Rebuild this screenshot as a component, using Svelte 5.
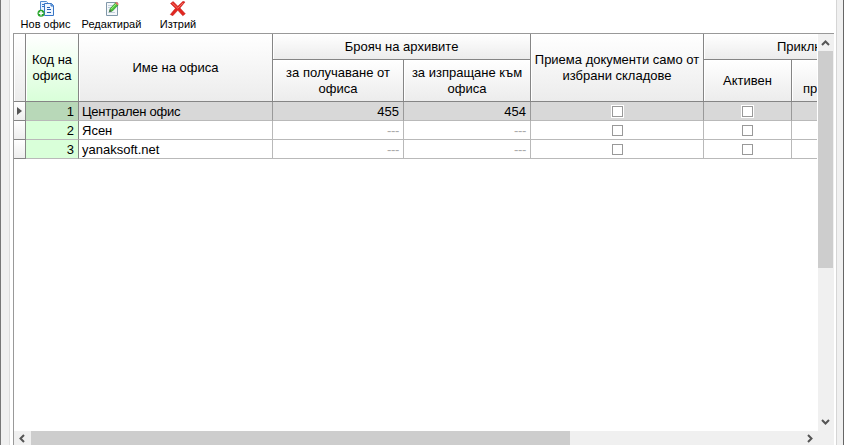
<script>
  const offices = [
    { id: 1, name: 'Централен офис', received: '455', sent: '454' },
    { id: 2, name: 'Ясен', received: '---', sent: '---' },
    { id: 3, name: 'yanaksoft.net', received: '---', sent: '---' }
  ];
  let selected = $state(1);
</script>

<div class="window">
  <div class="edge left"></div>
  <main>
    <div class="toolbar">
      <button class="new">
        <svg width="18" height="17" viewBox="0 0 18 17">
          <path d="M3.5 1.5h6l1 1v9h-7z" fill="#e8f2ff" stroke="#508bd2" />
          <path d="M5 4.5h4M5 6.5h3" stroke="#3576c5" />
          <path d="M7.5 3.5h7l2 2v10h-9z" fill="#eff6ff" stroke="#3876c5" />
          <path d="M14 3.5v2.5h2.5" fill="#8bb8ed" stroke="#3876c5" />
          <path d="M10 7.5h3M10 9.5h4M10 12.5h4" stroke="#245fb3" />
          <circle cx="4" cy="13.2" r="3.5" fill="#27a52b" />
          <path d="M4 11v4.5M1.8 13.2h4.5" stroke="#fff" stroke-width="1.4" />
        </svg>
        <span>Нов офис</span>
      </button>
      <button class="edit">
        <svg width="18" height="17" viewBox="0 0 18 17">
          <path d="M3.5 2.5h11v13h-11z" fill="#f4f7fa" stroke="#8198aa" />
          <path d="M5 5.5h5M5 7.5h4M5 12.5h7" stroke="#c3d0dc" />
          <path d="M6.3 11.9l.8-3.1 5.6-6 2.4 2.2-5.7 6z" fill="#4fc53c" stroke="#258b2b" stroke-width=".7" />
          <path d="M12.2 3.1l1.3-1.3 2.3 2.1-1.2 1.4z" fill="#e9746a" />
          <path d="M8 9.2l4.9-5.1" stroke="#a6ed80" />
          <path d="M6.2 12l.7-2.4 1.7 1.7z" fill="#555" />
        </svg>
        <span>Редактирай</span>
      </button>
      <button class="delete">
        <svg width="18" height="17" viewBox="0 0 18 17">
          <path d="M1.5 3.5l2.7-2 4.6 4.7 5.2-4.9 2 .7-5 6 5.3 5.8-2.5 2-5-5.5-5 5.4-2.5-1.2 5.1-6.2z" fill="#e22720" stroke="#bd1b19" stroke-width=".5" />
          <path d="M3.2 3.1l5.6 5.2 5.1-5.3" fill="none" stroke="#f47268" />
        </svg>
        <span>Изтрий</span>
      </button>
    </div>

    <section class="data">
      <div class="upper">
        <div class="table">
          <div class="head">
            <div class="tall"></div>
            <div class="tall code"><span>Код на<br />офиса</span></div>
            <div class="tall"><span>Име на офиса</span></div>
            <div class="counter"><span>Брояч на архивите</span></div>
            <div class="sub"><span>за получаване от<br />офиса</span></div>
            <div class="sub"><span>за изпращане към<br />офиса</span></div>
            <div class="tall stores"><span>Приема документи само от<br />избрани складове</span></div>
            <div class="apps"><span>Приклю</span></div>
            <div class="sub active"><span>Активен</span></div>
            <div class="sub last"><span>пр</span></div>
          </div>
          {#each offices as office}
            <div class="row" class:selected={selected === office.id}>
              <div class="marker">
                {#if selected === office.id}<svg width="5" height="8"><path d="M0 0l5 4-5 4z" fill="#555" /></svg>{/if}
              </div>
              <div class="id number">{office.id}</div>
              <div class="name" class:tight={office.id === 1}>{office.name}</div>
              <div class="number" class:empty={office.id !== 1}>{office.received}</div>
              <div class="number" class:empty={office.id !== 1}>{office.sent}</div>
              <div class="check"><i></i></div>
              <div class="check"><i></i></div>
              <div></div>
            </div>
          {/each}
        </div>
        <div class="vertical">
          <svg width="15" height="17"><path d="M4 11l3.5-3.5L11 11" /></svg>
          <div class="thumb"></div>
          <svg class="down" width="15" height="17"><path d="M4 6l3.5 3.5L11 6" /></svg>
        </div>
      </div>
      <div class="horizontal">
        <svg width="17" height="14"><path d="M10 4L6.5 7.5 10 11" /></svg>
        <div class="thumb"></div>
        <svg class="right" width="17" height="14"><path d="M7 4l3.5 3.5L7 11" /></svg>
      </div>
    </section>
  </main>
  <div class="edge end"></div>
</div>

<style>
  :global(body) { overflow: hidden; background: #fff; }
  * { box-sizing: border-box; }
  .window { display: flex; width: 844px; height: 445px; overflow: hidden; font: 13px/16px "Liberation Sans", Arial, sans-serif; color: #000; }
  .edge { background: #f0f0f0; flex: none; }
  .left { width: 10px; border-left: 1px solid #777; border-right: 1px solid #dcdcdc; }
  .end { width: 8px; border-left: 1px solid #d5d5d5; border-right: 1px solid #666; }
  main { width: 826px; padding: 0 2px 0 3px; }
  .toolbar { height: 33px; display: flex; padding-left: 5px; }
  button { border: 0; background: transparent; padding: 0; display: flex; flex-direction: column; align-items: center; color: #000; font: 11px/13px "Liberation Sans", Arial, sans-serif; }
  button svg { display: block; flex: none; }
  button span { white-space: nowrap; padding-top: 1px; }
  .new { width: 55px; }
  .edit { width: 77px; }
  .delete { width: 56px; }
  .data { width: 821px; height: 412px; border-top: 1px solid #999; border-left: 1px solid #999; }
  .upper { display: flex; height: 397px; }
  .table { width: 804px; overflow: hidden; background: #fff; }
  .head, .row { display: grid; width: 803px; grid-template-columns: 12px 53px 194px 131px 127px 173px 88px 25px; }
  .head { grid-template-rows: 26px 42px; }
  .head > div { display: flex; align-items: center; justify-content: center; text-align: center; border-right: 1px solid #858585; border-bottom: 1px solid #858585; background: linear-gradient(#fff, #ececec); box-shadow: inset 1px 1px #fff; white-space: nowrap; overflow: hidden; }
  .head .tall { grid-row: 1 / 3; }
  .head .code { background: linear-gradient(#fff, #d9ffd9); }
  .head .counter { grid-column: 4 / 6; grid-row: 1; }
  .sub { grid-row: 2; }
  .stores { grid-column: 6; }
  .head .apps { grid-column: 7 / 9; grid-row: 1; justify-content: flex-start; padding-left: 73px; border-right: 0; }
  .active { grid-column: 7; }
  .head .last { justify-content: flex-start; align-items: flex-end; padding: 0 0 4px 11px; border-right: 0; }
  .row { height: 19px; line-height: 20px; }
  .row > div { border-right: 1px solid #b9b9b9; border-bottom: 1px solid #b9b9b9; white-space: nowrap; overflow: hidden; }
  .row > div:last-child { border-right: 0; }
  .row .marker { display: flex; align-items: center; padding-left: 3px; border-right-color: #858585; border-bottom-color: #858585; background: linear-gradient(#fff, #eee); }
  .selected > div { background: #d8d8d8; border-right-color: #999; }
  .number { text-align: right; padding-right: 4px; }
  .row .id { background: #d9ffd9; border-right-color: #858585; }
  .selected .id { background: #b8d8b8; }
  .name { padding-left: 3px; }
  .tight { letter-spacing: -.25px; }
  .empty { color: #aaa; letter-spacing: -.3px; }
  .check { display: flex; align-items: center; justify-content: center; }
  .check i { width: 11px; height: 11px; border: 1px solid #999; background: #fff; }
  .selected .check i { outline: 1px solid #fff; }
  .vertical { width: 16px; background: #f0f0f0; display: flex; flex-direction: column; }
  .vertical .thumb { width: 15px; height: 217px; background: #cdcdcd; }
  .vertical .down { margin-top: auto; }
  .horizontal { display: flex; height: 14px; background: #f0f0f0; }
  .horizontal .thumb { width: 539px; background: #cdcdcd; }
  .horizontal .right { margin-left: auto; margin-right: 16px; }
  .vertical svg, .horizontal svg { display: block; fill: none; stroke: #555; stroke-width: 2; flex: none; }
</style>
